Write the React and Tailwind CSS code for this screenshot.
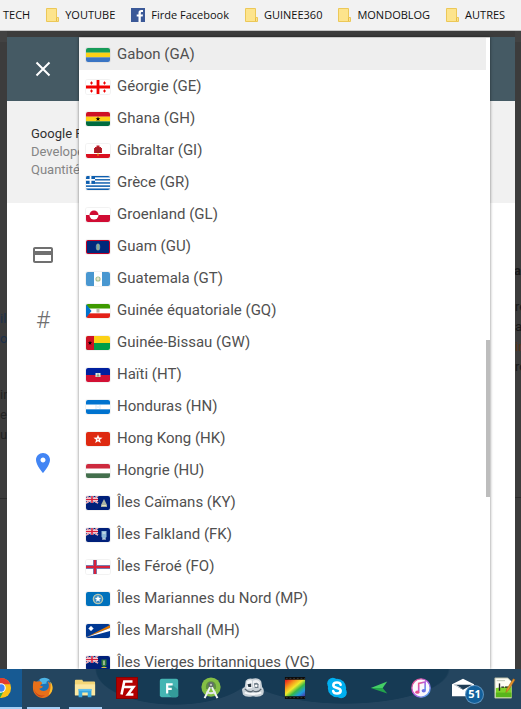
import { useState } from 'react'

function Star({ cx, cy, r, fill }) {
  const points = []
  for (let i = 0; i < 10; i++) {
    const a = -Math.PI / 2 + (i * Math.PI) / 5
    const d = i % 2 ? r * 0.42 : r
    points.push(`${cx + d * Math.cos(a)},${cy + d * Math.sin(a)}`)
  }
  return <polygon points={points.join(' ')} fill={fill} />
}

// horizontal bands, top to bottom
function Bands({ colors }) {
  const h = 14 / colors.length
  return colors.map((c, i) => <rect key={i} y={i * h} width="24" height={h + 0.1} fill={c} />)
}

function BlueEnsign({ children }) {
  return (
    <>
      <rect width="24" height="14" fill="#00207a" />
      <path d="M0 0L12 7M12 0L0 7" stroke="#fff" strokeWidth="1.6" />
      <path d="M0 0L12 7M12 0L0 7" stroke="#d8213b" strokeWidth="0.6" />
      <path d="M6 0V7M0 3.5H12" stroke="#fff" strokeWidth="2.8" />
      <path d="M6 0V7M0 3.5H12" stroke="#d8213b" strokeWidth="1.6" />
      {children}
    </>
  )
}

const flags = {
  GA: <Bands colors={['#169b58', '#fcd116', '#3a75c4']} />,
  GE: (
    <>
      <rect width="24" height="14" fill="#fff" />
      <path d="M12 0V14M0 7H24" stroke="#f00000" strokeWidth="2.8" />
      <path d="M4 3H7M5.5 1.5V4.5M17 3H20M18.5 1.5V4.5M4 11H7M5.5 9.5V12.5M17 11H20M18.5 9.5V12.5" stroke="#f00000" />
    </>
  ),
  GH: (
    <>
      <Bands colors={['#ce1126', '#fcd116', '#006b3f']} />
      <Star cx={12} cy={7} r={2.5} fill="#000" />
    </>
  ),
  GI: (
    <>
      <rect width="24" height="14" fill="#fff" />
      <rect y="10" width="24" height="4" fill="#da1020" />
      <path d="M8 9V4H9V3H10.5V1.5H13.5V3H15V4H16V9Z" fill="#c0202c" />
      <path d="M10 4V9M12 3V9M14 4V9" stroke="#7d1720" strokeWidth="0.7" />
      <path d="M12 9V12" stroke="#f3c300" strokeWidth="0.8" />
    </>
  ),
  GR: (
    <>
      <Bands colors={['#0d5eaf', '#fff', '#0d5eaf', '#fff', '#0d5eaf', '#fff', '#0d5eaf', '#fff', '#0d5eaf']} />
      <rect width="9" height="7.8" fill="#0d5eaf" />
      <path d="M4.5 0V7.8M0 3.9H9" stroke="#fff" strokeWidth="1.8" />
    </>
  ),
  GL: (
    <>
      <Bands colors={['#fff', '#d00c33']} />
      <path d="M3.5 7A4.5 4.5 0 0 1 12.5 7Z" fill="#d00c33" />
      <path d="M3.5 7A4.5 4.5 0 0 0 12.5 7Z" fill="#fff" />
    </>
  ),
  GU: (
    <>
      <rect width="24" height="14" fill="#be0027" />
      <rect x="1" y="1" width="22" height="12" fill="#00297b" />
      <ellipse cx="12" cy="7" rx="2.2" ry="3.6" fill="#5f9ab5" />
      <path d="M12 4V10" stroke="#c7b36a" />
    </>
  ),
  GT: (
    <>
      <rect width="24" height="14" fill="#4997d0" />
      <rect x="8" width="8" height="14" fill="#fff" />
      <circle cx="12" cy="7" r="2" fill="none" stroke="#a5bd8a" strokeWidth="1.2" />
      <circle cx="12" cy="7" r="0.8" fill="#d9c47c" />
    </>
  ),
  GQ: (
    <>
      <Bands colors={['#3e9a00', '#fff', '#e32118']} />
      <path d="M0 0L5.5 7L0 14Z" fill="#0073ce" />
      <rect x="10.5" y="5" width="3" height="3.5" fill="#b9bdb0" />
    </>
  ),
  GW: (
    <>
      <Bands colors={['#fcd116', '#009e49']} />
      <rect width="8" height="14" fill="#ce1126" />
      <Star cx={4} cy={7} r={2.3} fill="#000" />
    </>
  ),
  HT: (
    <>
      <Bands colors={['#00209f', '#d21034']} />
      <rect x="9.5" y="5" width="5" height="4" fill="#e9ece6" />
      <path d="M10.5 8H13.5M12 5.5V8" stroke="#6f8f6a" />
    </>
  ),
  HN: (
    <>
      <Bands colors={['#0073cf', '#fff', '#0073cf']} />
      <path d="M9.5 6H10.5M13.5 6H14.5M11.5 7H12.5M9.5 8H10.5M13.5 8H14.5" stroke="#a8d0f0" />
    </>
  ),
  HK: (
    <>
      <rect width="24" height="14" fill="#de2910" />
      <Star cx={12} cy={7.2} r={4.8} fill="#fff" />
      <circle cx="12" cy="7.2" r="0.7" fill="#de2910" />
    </>
  ),
  HU: <Bands colors={['#cd2a3e', '#fff', '#436f4d']} />,
  KY: (
    <BlueEnsign>
      <path d="M18 3L21 9V11H15V9Z" fill="#a9b3a4" />
      <path d="M16 9.5H20" stroke="#e6e2c0" />
    </BlueEnsign>
  ),
  FK: (
    <BlueEnsign>
      <path d="M15.5 3H20.5V9L18 11.5L15.5 9Z" fill="#8fb8d8" />
      <path d="M16.5 5H19.5M16 11H20" stroke="#e9edf0" />
    </BlueEnsign>
  ),
  FO: (
    <>
      <rect width="24" height="14" fill="#fff" />
      <path d="M9 0V14M0 7H24" stroke="#5b9bd6" strokeWidth="4" />
      <path d="M9 0V14M0 7H24" stroke="#d8213b" strokeWidth="2.6" />
    </>
  ),
  MP: (
    <>
      <rect width="24" height="14" fill="#0071bc" />
      <circle cx="12" cy="7" r="4.6" fill="#3c8fc4" stroke="#b9c6ae" strokeWidth="1.4" />
      <Star cx={12} cy={7} r={3.4} fill="#fff" />
    </>
  ),
  MH: (
    <>
      <rect width="24" height="14" fill="#003893" />
      <path d="M0 13.5L24 1V4Z" fill="#dd7500" />
      <path d="M0 13.5L24 4V7Z" fill="#fff" />
      <circle cx="5" cy="4.5" r="1.9" fill="#fff" />
      <path d="M5 2V7M2.5 4.5H7.5" stroke="#fff" strokeWidth="0.8" />
    </>
  ),
  VG: (
    <BlueEnsign>
      <path d="M15.5 3.5H20.5V9L18 11.5L15.5 9Z" fill="#2d7a3c" />
      <path d="M18 4.5V9" stroke="#e4dfc8" strokeWidth="1.2" />
      <path d="M15.5 11.5H20.5" stroke="#d8bd4c" />
    </BlueEnsign>
  ),
}

const countries = [
  ['GA', 'Gabon'],
  ['GE', 'Géorgie'],
  ['GH', 'Ghana'],
  ['GI', 'Gibraltar'],
  ['GR', 'Grèce'],
  ['GL', 'Groenland'],
  ['GU', 'Guam'],
  ['GT', 'Guatemala'],
  ['GQ', 'Guinée équatoriale'],
  ['GW', 'Guinée-Bissau'],
  ['HT', 'Haïti'],
  ['HN', 'Honduras'],
  ['HK', 'Hong Kong'],
  ['HU', 'Hongrie'],
  ['KY', 'Îles Caïmans'],
  ['FK', 'Îles Falkland'],
  ['FO', 'Îles Féroé'],
  ['MP', 'Îles Mariannes du Nord'],
  ['MH', 'Îles Marshall'],
  ['VG', 'Îles Vierges britanniques'],
]

function Flag({ code }) {
  return (
    <span className="mt-0.5 h-3.5 w-6 shrink-0 overflow-hidden rounded-xs ring-1 ring-black/5">
      <svg viewBox="0 0 24 14" className="block h-full w-full">{flags[code]}</svg>
    </span>
  )
}

function FolderIcon() {
  return (
    <svg viewBox="0 0 13 14" className="h-3.5 w-[13px] shrink-0">
      <path d="M0.5 0.5H10.5V9.5H12.5V13.5H0.5Z" fill="#fde48c" stroke="#ecc858" />
      <path d="M10.5 9.5V13" stroke="#e9bd45" />
    </svg>
  )
}

function FacebookIcon() {
  return (
    <svg viewBox="0 0 14 14" className="h-3.5 w-3.5 shrink-0">
      <rect width="14" height="14" fill="#3b5998" />
      <path d="M7.5 14V8.5H5.7V6.4H7.5V4.8C7.5 2.9 8.6 2 10.300 2H12V4.100H10.900C10 4.100 9.800 4.500 9.800 5.200V6.400H12L11.700 8.500H9.800V14Z" fill="#fff" />
    </svg>
  )
}

function Bookmark({ icon, label }) {
  return (
    <a href="#" className="flex shrink-0 items-center gap-1.5">
      {icon}
      {label}
    </a>
  )
}

function BookmarksBar() {
  return (
    <nav className="flex h-[31px] shrink-0 items-center gap-4 overflow-hidden border-b border-[#c4c4c4] bg-[#f2f2f2] pl-[3px] font-['Open_Sans',sans-serif] text-[11px] whitespace-nowrap text-[#111]">
      <Bookmark label="TECH" />
      <Bookmark icon={<FolderIcon />} label="YOUTUBE" />
      <Bookmark icon={<FacebookIcon />} label="Firde Facebook" />
      <Bookmark icon={<FolderIcon />} label="GUINEE360" />
      <Bookmark icon={<FolderIcon />} label="MONDOBLOG" />
      <Bookmark icon={<FolderIcon />} label="AUTRES" />
    </nav>
  )
}

const taskbarApps = [
  {
    name: 'Chrome',
    active: true,
    icon: (
      <>
        <circle cx="12" cy="12" r="11" fill="#fbc116" />
        <path d="M12 12L2.5 6.5A11 11 0 0 1 21.5 6.5L22 8H12Z" fill="#e33b2e" />
        <path d="M2.5 6.5A11 11 0 0 0 11 23L15.5 14.5L8 14Z" fill="#2da94f" />
        <circle cx="12" cy="12" r="5.2" fill="#fff" />
        <circle cx="12" cy="12" r="4" fill="#4285f4" />
      </>
    ),
  },
  {
    name: 'Firefox',
    open: true,
    icon: (
      <>
        <circle cx="12.5" cy="11" r="9.5" fill="#1c72b8" />
        <path d="M8 3C11 0 17 0 20 4C17 3 15 5 16 7L11 8Z" fill="#4cb4e6" />
        <path d="M2 4C3 5 5 5 7 5C9 4 11 6 11 7L9 9C9 10 11 10 12 10C11 13 8 12 8 13C10 16 16 16 18 12C19 9 18 7 17 5C21 7 23 10 22 14C21 19 17 23 12 23C6 23 1 18 1 12C1 9 1 6 2 4Z" fill="#e8701a" />
        <path d="M20 5C24 10 23 17 18 20C20 15 21 10 20 5Z" fill="#fbc02d" />
        <path d="M2 12C3 18 8 21 14 20C10 24 3 20 2 12Z" fill="#c8431b" />
      </>
    ),
  },
  {
    name: 'Explorateur de fichiers',
    open: true,
    icon: (
      <>
        <path d="M1 4Q1 3 2 3H9L10 5H22Q23 5 23 6V20H1Z" fill="#f3d677" />
        <path d="M1 8H23V20H1Z" fill="#fbe8a2" />
        <path d="M5 13H19V22H15V17H9V22H5Z" fill="#35a7e3" />
        <path d="M5 13H19V15H5Z" fill="#63c1ee" />
      </>
    ),
  },
  {
    name: 'FileZilla',
    icon: (
      <>
        <rect x="0.5" y="0.5" width="23" height="23" fill="#b30000" stroke="#8b0000" />
        <path d="M6 19L9 5H18M8 11H14M12 11H19L13 19H19" fill="none" stroke="#fff" strokeWidth="2.8" />
      </>
    ),
  },
  {
    name: 'Fotor',
    icon: (
      <>
        <rect x="2" y="2" width="20" height="20" rx="2" fill="#45b5b3" />
        <path d="M15 8L22 14V20Q22 22 20 22H15L9 17Z" fill="#349b9a" />
        <path d="M10 18V8H16M10 13H15" fill="none" stroke="#fff" strokeWidth="2.4" />
      </>
    ),
  },
  {
    name: 'Android Studio',
    icon: (
      <>
        <circle cx="12" cy="11" r="10.5" fill="#84bf45" />
        <path d="M6.5 13V10A5.5 5.5 0 0 1 17.5 10V13Z" fill="#5f8f42" />
        <circle cx="12" cy="8.5" r="3" fill="#626b6e" />
        <circle cx="12" cy="8.5" r="1.2" fill="#c9d6c0" />
        <path d="M11 11L5 23M13 11L19 23" stroke="#f1f3f4" strokeWidth="2.2" />
        <path d="M7 16Q12 19.5 17 16" fill="none" stroke="#e3e7e9" strokeWidth="2" />
      </>
    ),
  },
  {
    name: 'GameRanger',
    icon: (
      <>
        <path d="M0 14Q0 12 3 11L4 4Q7 1 11 2Q18 0 21 5L22 11Q25 14 23 19Q19 23 12 21Q4 23 1 19Z" fill="#c9d1d7" />
        <path d="M5 5Q8 2 11 4V12L5 13Z" fill="#f2f5f7" />
        <path d="M12 4Q17 2 20 6L19 12L12 11Z" fill="#eef1f4" />
        <path d="M6 8L10 7V11H7Z" fill="#2b3a46" />
        <path d="M13 7Q17 5 18 8V12H14Z" fill="#6e7d88" />
        <circle cx="15.5" cy="9.5" r="1.4" fill="#fff" />
        <path d="M3 13Q8 18 12 15Q17 18 21 13" fill="none" stroke="#5b6771" strokeWidth="1.4" />
        <path d="M3 17Q11 20 21 17" fill="none" stroke="#f7f8f9" strokeWidth="2" />
      </>
    ),
  },
  {
    name: 'Movie Maker',
    icon: (
      <>
        <defs>
          <linearGradient id="film" x1="0" y1="0" x2="1" y2="1">
            <stop offset="0.05" stopColor="#e8261c" />
            <stop offset="0.28" stopColor="#f79a1d" />
            <stop offset="0.45" stopColor="#f1e92b" />
            <stop offset="0.62" stopColor="#35b84a" />
            <stop offset="0.8" stopColor="#1e9be0" />
            <stop offset="1" stopColor="#4a2fa0" />
          </linearGradient>
        </defs>
        <rect x="1" y="0" width="22" height="24" fill="#0b0b0b" />
        <rect x="1" y="3" width="22" height="18" fill="url(#film)" />
        <path d="M2 1.5H23M2 22.5H23" stroke="#3a3a3a" strokeDasharray="2 2" />
      </>
    ),
  },
  {
    name: 'Skype',
    icon: (
      <>
        <circle cx="12" cy="12" r="10" fill="#00aff0" />
        <circle cx="7.5" cy="7" r="6.2" fill="#00aff0" />
        <circle cx="16.5" cy="17" r="6.2" fill="#00aff0" />
        <path d="M16 8.5C15.5 6.5 13.5 6 12 6C9.5 6 8 7.2 8 9C8 13 16 11 16 15C16 17 14.2 18 12 18C9.8 18 8.2 17 7.8 15.2" fill="none" stroke="#fff" strokeWidth="2.8" strokeLinecap="round" />
      </>
    ),
  },
  {
    name: 'GPS',
    icon: (
      <>
        <path d="M3 12L21 5L16 12Z" fill="#43cf66" />
        <path d="M3 12L21 18L16 12Z" fill="#23a54c" />
      </>
    ),
  },
  {
    name: 'iTunes',
    icon: (
      <>
        <defs>
          <linearGradient id="itunes" x1="0" y1="0" x2="1" y2="1">
            <stop offset="0" stopColor="#f4567c" />
            <stop offset="0.5" stopColor="#b45ae0" />
            <stop offset="1" stopColor="#3fb3f2" />
          </linearGradient>
        </defs>
        <circle cx="12" cy="12" r="10" fill="#fbf8fb" stroke="url(#itunes)" strokeWidth="1.5" />
        <path d="M9.5 16V7L16.5 5.5V14.5" fill="none" stroke="url(#itunes)" strokeWidth="1.8" />
        <ellipse cx="8" cy="16.5" rx="2.3" ry="1.9" fill="#e2508f" />
        <ellipse cx="15" cy="15" rx="2.3" ry="1.9" fill="#6b6fe4" />
      </>
    ),
  },
  {
    name: 'Courrier',
    badge: '51',
    icon: (
      <>
        <path d="M0 8L12 2L24 8V21H0Z" fill="#fff" />
        <path d="M2 8.500H22L12 14Z" fill="#1e3c55" />
        <path d="M2 9L12 13L5 9Z" fill="#fff" />
      </>
    ),
  },
  {
    name: 'Notepad++',
    icon: (
      <>
        <path d="M1 1H15L19 5V23H1Z" fill="#fdfdf3" stroke="#aeb4a0" />
        <path d="M2 12L19 10V22H2Z" fill="#7fd32a" />
        <path d="M2 17H19V22H2Z" fill="#58b51c" />
        <path d="M6 7V15" stroke="#222" strokeWidth="1.5" />
        <path d="M8 11H15" stroke="#222" strokeWidth="1.5" strokeDasharray="3 1" />
        <path d="M3 4H12" stroke="#b9c0ae" />
        <path d="M13 17L14 13L21 2L23 3L16 14Z" fill="#e8952b" stroke="#a5601a" strokeWidth="0.6" />
      </>
    ),
  },
]

function TaskbarButton({ app }) {
  return (
    <button
      aria-label={app.name}
      className={`flex w-[42px] shrink-0 flex-col items-center ${app.active ? 'bg-[#175a93]' : ''}`}
    >
      <span className="relative flex flex-1 items-center">
        <svg viewBox="0 0 24 24" className="h-[22px] w-6">{app.icon}</svg>
        {app.badge && (
          <span className="absolute -right-2 bottom-1 flex h-[17px] w-[17px] items-center justify-center rounded-full bg-[#12609c] text-[11px] font-bold text-white ring-1 ring-[#5a93c0]">
            {app.badge}
          </span>
        )}
      </span>
      <span className={`h-0.5 ${app.active ? 'w-full bg-[#a4cff5]' : app.open ? 'w-[33px] bg-[#a4cff5]' : 'w-[33px]'}`} />
    </button>
  )
}

function Taskbar() {
  return (
    <footer className="flex h-10 shrink-0 overflow-hidden bg-[#24455f] bg-[radial-gradient(80px_36px_at_175px_0px,#163a54_98%,transparent),radial-gradient(105px_35px_at_345px_0px,#163a54_98%,transparent)] font-['Open_Sans',sans-serif]">
      <div className="-ml-5 flex">
        {taskbarApps.map(app => <TaskbarButton key={app.name} app={app} />)}
      </div>
    </footer>
  )
}

function PaymentDialog({ children }) {
  return (
    <section role="dialog" aria-label="Paiement" className="relative mt-1.5 flex min-w-0 flex-1 flex-col bg-white">
      <header className="flex h-16 shrink-0 items-center bg-[#455a64] px-6">
        <button aria-label="Fermer">
          <svg viewBox="0 0 24 24" className="h-6 w-6">
            <path d="M5.5 5.5L18.5 18.5M18.5 5.5L5.5 18.5" stroke="#fff" strokeWidth="2" />
          </svg>
        </button>
      </header>
      <div className="bg-[#f1f1f1] px-6 py-6 text-[13px] leading-[18px] text-[#858585]">
        <p className="text-[#303030]">Google Play</p>
        <p>Developer</p>
        <p>Quantité</p>
      </div>
      <div className="flex flex-col items-start px-6 pt-10 text-[#707070]">
        <svg viewBox="0 0 24 24" className="h-6 w-6" fill="currentColor">
          <path d="M20 4H4c-1.110 0-1.990.890-1.990 2L2 18c0 1.110.890 2 2 2h16c1.110 0 2-.890 2-2V6c0-1.110-.890-2-2-2zm0 14H4v-6h16v6zm0-10H4V6h16v2z" />
        </svg>
        <span className="mt-[41px] w-6 text-center text-[24px] leading-6 font-light">#</span>
        <svg viewBox="0 0 24 24" className="mt-[119px] h-6 w-6">
          <path d="M12 2C8.130 2 5 5.130 5 9c0 5.250 7 13 7 13s7-7.750 7-13c0-3.870-3.130-7-7-7zm0 9.500c-1.380 0-2.500-1.120-2.500-2.500s1.120-2.500 2.500-2.500 2.500 1.120 2.500 2.500-1.120 2.500-2.500 2.500z" fill="#4285f4" />
        </svg>
      </div>
      {children}
    </section>
  )
}

function CountryMenu() {
  const [selected, setSelected] = useState('GA')

  return (
    <div className="absolute top-0 right-[25px] bottom-0 left-[72px] overflow-hidden border-t border-[#c8c8c8] bg-white shadow-[0_0_3px_rgba(0,0,0,0.5)]">
      <div role="listbox" aria-label="Pays" className="mr-1 flex flex-col">
        {countries.map(([code, name]) => (
          <button
            key={code}
            role="option"
            aria-selected={selected === code}
            onClick={() => setSelected(code)}
            className={`flex h-8 shrink-0 items-center gap-[7px] pl-[7px] text-left text-[15px] whitespace-nowrap text-[#505050] ${selected === code ? 'bg-[#eee]' : ''}`}
          >
            <Flag code={code} />
            {name} ({code})
          </button>
        ))}
      </div>
      <div className="absolute top-[302px] right-0 h-[157px] w-1 bg-[#bdbdbd]" />
    </div>
  )
}

export default function App() {
  return (
    <div className="flex h-screen flex-col overflow-hidden bg-[#3c3c3c] font-[Roboto,sans-serif]">
      <BookmarksBar />
      <main className="flex min-h-0 flex-1 overflow-hidden">
        <div className="flex w-[7px] shrink-0 flex-col items-start overflow-hidden border-t-[11px] border-[#424242] pt-[267px] text-[13px] leading-5 text-[#222]">
          <span className="text-[#1b304a]">ila</span>
          <span className="text-[#1b304a]">oc</span>
          <span className="mt-9">in</span>
          <span>el</span>
          <span>un</span>
          <span className="mt-[53px] h-px w-full shrink-0 bg-[#2c2c2c]" />
        </div>
        <PaymentDialog>
          <CountryMenu />
        </PaymentDialog>
        <div className="flex w-1.5 shrink-0 flex-col overflow-hidden border-t-[11px] border-[#424242] pt-[219px] text-[13px] leading-5 text-[#191919]">
          <span className="self-end font-bold">Ca</span>
          <span className="mt-4">re</span>
          <span>a</span>
          <span className="text-[#5a3418]">in</span>
          <span>ro</span>
          <span className="mt-[120px] h-px w-full shrink-0 bg-[#2c2c2c]" />
        </div>
      </main>
      <Taskbar />
    </div>
  )
}
